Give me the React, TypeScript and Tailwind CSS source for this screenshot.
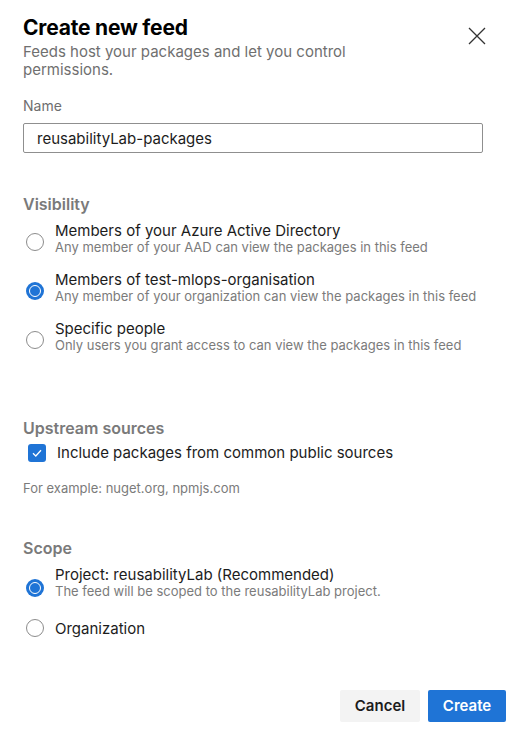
import React, { useState } from 'react';

const font = { fontFamily: 'Inter, "Noto Sans", sans-serif' };

interface RadioOptionProps {
  label: string;
  description?: string;
  checked: boolean;
  onSelect: () => void;
  radioOffset?: string;
}

const Radio: React.FC<{ checked: boolean }> = ({ checked }) =>
  checked ? (
    <span className="w-[18px] h-[18px] rounded-full bg-[#1f74d6] flex items-center justify-center flex-shrink-0">
      <span className="block w-[12px] h-[12px] rounded-full border-[1.5px] border-white bg-[#1f74d6]" />
    </span>
  ) : (
    <span className="block w-[18px] h-[18px] rounded-full border border-[#8c8c8c] bg-white flex-shrink-0" />
  );

const RadioOption: React.FC<RadioOptionProps> = ({ label, description, checked, onSelect, radioOffset = 'mt-[11px]' }) => (
  <button
    type="button"
    onClick={onSelect}
    className={`flex w-full text-left pl-[3px] gap-[11px] ${description ? 'items-start' : 'items-center'}`}
  >
    <span className={`flex flex-shrink-0 ${description ? radioOffset : ''}`}>
      <Radio checked={checked} />
    </span>
    <span className="flex flex-col">
      <span className="text-[15px] leading-[17px] text-[#1c1c1c]">{label}</span>
      {description && <span className="text-[13px] leading-[16px] text-[#7b7b7b]">{description}</span>}
    </span>
  </button>
);

const SectionTitle: React.FC<{ children: React.ReactNode; className?: string }> = ({ children, className = '' }) => (
  <h3 className={`text-[16px] leading-[22px] font-semibold text-[#7a7a7a] ${className}`}>{children}</h3>
);

export default function App() {
  const [name, setName] = useState('reusabilityLab-packages');
  const [visibility, setVisibility] = useState('org');
  const [upstream, setUpstream] = useState(true);
  const [scope, setScope] = useState('project');

  return (
    <div className="w-[515px] h-[739px] bg-white flex flex-col" style={font}>
      <div className="flex-1 pl-[23px] pr-[32px]">
        <div className="flex items-start justify-between">
          <div className="pt-[14px] w-[350px]">
            <h2 className="text-[21px] leading-[28px] font-bold text-black tracking-[-0.2px]">Create new feed</h2>
            <p className="mt-[1px] text-[15px] leading-[18px] text-[#6f6f6f]">
              Feeds host your packages and let you control permissions.
            </p>
          </div>
          <button type="button" className="mt-[27px] mr-[-3px] text-[#333]" aria-label="Close">
            <svg width="18" height="18" viewBox="0 0 18 18" fill="none" stroke="currentColor" strokeWidth="1.3">
              <path d="M1 1L17 17M17 1L1 17" />
            </svg>
          </button>
        </div>

        <label className="block mt-[17px] text-[14px] leading-[20px] text-[#6e6e6e]">Name</label>
        <input
          value={name}
          onChange={e => setName(e.target.value)}
          className="mt-[7px] w-full h-[30px] border border-[#8f8f8f] rounded-[2px] px-[13px] text-[15px] text-[#1c1c1c] outline-none"
        />

        <SectionTitle className="mt-[40px]">Visibility</SectionTitle>
        <div className="mt-[7px] flex flex-col gap-[16px]">
          <RadioOption
            label="Members of your Azure Active Directory"
            description="Any member of your AAD can view the packages in this feed"
            checked={visibility === 'aad'}
            onSelect={() => setVisibility('aad')}
          />
          <RadioOption
            label="Members of test-mlops-organisation"
            description="Any member of your organization can view the packages in this feed"
            checked={visibility === 'org'}
            onSelect={() => setVisibility('org')}
          />
          <RadioOption
            label="Specific people"
            description="Only users you grant access to can view the packages in this feed"
            checked={visibility === 'people'}
            onSelect={() => setVisibility('people')}
          />
        </div>

        <SectionTitle className="mt-[64px]">Upstream sources</SectionTitle>
        <button
          type="button"
          onClick={() => setUpstream(!upstream)}
          className="mt-[5px] flex items-center gap-[11px] pl-[5px] text-left"
        >
          <span
            className={`w-[18px] h-[18px] rounded-[3px] flex items-center justify-center ${upstream ? 'bg-[#1f74d6]' : 'border border-[#8c8c8c]'}`}
          >
            {upstream && (
              <svg width="12" height="12" viewBox="0 0 12 12" fill="none" stroke="white" strokeWidth="1.3">
                <path d="M2 6.3L4.8 9L10 3.2" />
              </svg>
            )}
          </span>
          <span className="text-[15px] leading-[18px] text-[#1c1c1c]">Include packages from common public sources</span>
        </button>
        <p className="mt-[18px] text-[13px] leading-[16px] text-[#7b7b7b]">For example: nuget.org, npmjs.com</p>

        <SectionTitle className="mt-[41px]">Scope</SectionTitle>
        <div className="mt-[7px] flex flex-col gap-[20px]">
          <RadioOption
            label="Project: reusabilityLab (Recommended)"
            description="The feed will be scoped to the reusabilityLab project."
            checked={scope === 'project'}
            onSelect={() => setScope('project')}
            radioOffset="mt-[13px]"
          />
          <RadioOption label="Organization" checked={scope === 'org'} onSelect={() => setScope('org')} />
        </div>
      </div>

      <div className="flex justify-end gap-[8px] pr-[9px] pb-[17px]">
        <button type="button" className="w-[80px] h-[32px] rounded-[2px] bg-[#f3f3f3] text-[15px] font-semibold text-[#1c1c1c]">
          Cancel
        </button>
        <button type="button" className="w-[78px] h-[32px] rounded-[2px] bg-[#1f74d6] text-[15px] font-semibold text-white">
          Create
        </button>
      </div>
    </div>
  );
}
